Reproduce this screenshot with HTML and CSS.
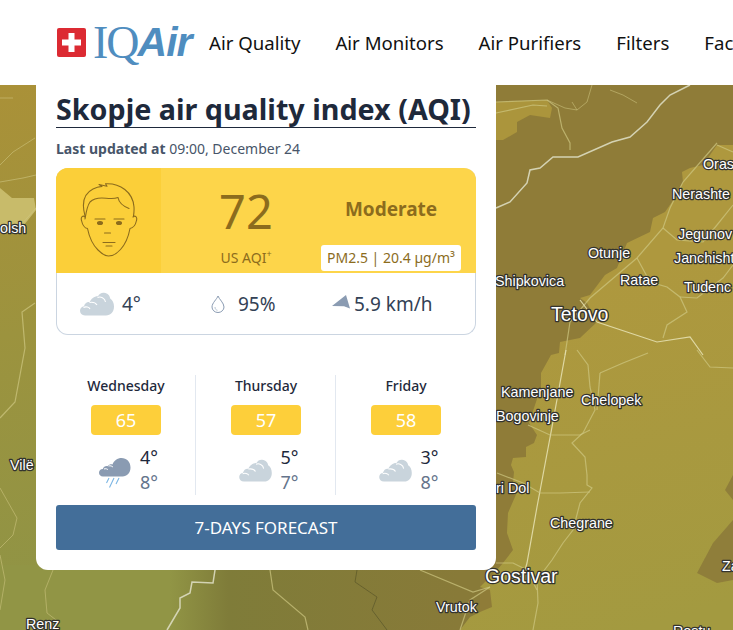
FILE: index.html
```html
<!DOCTYPE html>
<html lang="en">
<head>
<meta charset="utf-8">
<title>Skopje air quality index (AQI)</title>
<link rel="stylesheet" href="styles.css">
</head>
<body>
<svg class="defs" width="0" height="0" aria-hidden="true">
  <defs>
    <symbol id="cloud" viewBox="0 0 34 24">
      <path fill="#c9d4dc" d="M5 23.500C1.800 23.500 0 21.400 0 18.800c0-2.500 1.800-4.200 4-4.500.6-2.800 3-4.600 5.600-4.100C11 6.700 14.500 4 18 4.200c1.200-2.400 3.600-3.700 6-3.400 4 .4 5.800 3 6.200 5.800C32.600 8.200 34 11 34 14.500c0 5.500-3.400 9-8 9z"/>
      <path fill="none" stroke="#fff" stroke-width="1.100" d="M3.500 15.500c2.500-1.200 5.500-.4 6.500 1.500M9.500 10.500c3.500-.6 6 .2 7.500 2.500M17.500 5.500c3-1.500 7.500.5 8 4.500"/>
    </symbol>
    <symbol id="rain" viewBox="0 0 32 30">
      <path fill="#8a9bb2" d="M4 18.500C1.500 18.500 0 16.800 0 14.800c0-2.200 1.600-3.800 3.800-3.800.6-2 2.600-3.200 4.800-2.800C10 6.500 12 6 13.500 6.500 15 2.500 18.500 0 22.500 0c5 0 9 3.800 9 9.500 0 5.500-3.500 9-8 9z"/>
      <path fill="none" stroke="#fff" stroke-width="1" d="M5 11c1.500-.6 3.200-.2 4 .8M9.500 8c2-.5 3.500 0 4.500 1.200"/>
      <path fill="none" stroke="#7cb6e4" stroke-width="1.100" d="M10 20l-2.500 5M15 20l-4.500 9.500M20 20l-3 6"/>
    </symbol>
  </defs>
</svg>

<div class="map" aria-hidden="true">
  <svg class="map-svg" width="733" height="630" viewBox="0 0 733 630" preserveAspectRatio="none">
    <defs>
      <linearGradient id="leftGrad" x1="0" y1="85" x2="80" y2="630" gradientUnits="userSpaceOnUse">
        <stop offset="0" stop-color="#aa9138"/>
        <stop offset=".45" stop-color="#9c933e"/>
        <stop offset="1" stop-color="#8e9446"/>
      </linearGradient>
      <linearGradient id="bottomGrad" x1="170" y1="0" x2="460" y2="0" gradientUnits="userSpaceOnUse">
        <stop offset="0" stop-color="#919545"/>
        <stop offset=".2" stop-color="#7f7c39"/>
        <stop offset="1" stop-color="#887a38"/>
      </linearGradient>
      <linearGradient id="rightGrad" x1="540" y1="300" x2="640" y2="630" gradientUnits="userSpaceOnUse">
        <stop offset="0" stop-color="#ae983e"/>
        <stop offset="1" stop-color="#a39a40"/>
      </linearGradient>
      <filter id="soft"><feGaussianBlur stdDeviation=".35"/></filter>
    </defs>

    <rect width="733" height="630" fill="#8f7c38"/>
    <rect width="60" height="630" fill="url(#leftGrad)"/>
    <rect y="565" width="480" height="65" fill="url(#bottomGrad)"/>
    <rect y="565" width="170" height="65" fill="#919545"/>
    <polygon fill="#ab953c" points="496,102 547,100 552,108 550,118 530,115 517,122 517,132 503,140 496,140"/>

    <polygon fill="url(#rightGrad)" points="733,145 717,145 703,165 690,168 682,172 683,182 672,202 665,212 653,218 650,232 627,243 617,268 605,275 590,295 580,298 587,303 597,322 580,338 560,342 559,353 551,355 541,373 541,387 529,423 537,435 534,443 526,447 526,457 513,458 511,465 514,472 513,483 518,490 508,513 507,533 513,550 503,563 497,570 480,587 490,590 492,607 480,612 470,617 460,630 733,630"/>
    <polygon fill="#8f7e3a" points="733,475 725,490 733,500"/>
    <polygon fill="#8f7e3a" points="733,520 713,543 697,573 717,583 733,580"/>

    <g class="roads" filter="url(#soft)">
      <polyline class="border" points="496,208 510,202 527,183 530,170 540,168 553,157 578,157 612,142 630,137 647,122 660,105 670,95 690,85"/>
      <polyline class="border" points="215,570 213,583 192,582 190,593 180,598 180,608 167,630"/>
      <polyline points="496,102 547,100 558,108 562,128 570,143 570,150"/>
      <polyline points="496,113 533,105 547,106"/>
      <polyline class="thin" points="577,110 587,102 592,85"/>
      <polyline class="thin" points="610,90 623,95 637,103"/>
      <polyline class="thin" points="547,100 565,108 577,110 572,102"/>
      <polyline points="717,145 733,152"/>
      <polyline points="717,143 683,182 670,208 663,228 637,258 590,298 570,322 565,355"/>
      <polyline class="bright" points="580,300 597,322 630,333 657,342 690,337 703,355"/>
      <polyline points="637,258 650,282 667,287 680,297 687,312 667,325 663,338"/>
      <polyline points="680,297 697,298 723,278 733,265"/>
      <polyline points="663,228 677,240 703,242 717,225 733,205"/>
      <polyline class="bright" points="566,350 552,427 537,507 527,563 525,570"/>
      <polyline points="577,350 588,365 590,387 595,410 583,433 572,443 585,457 587,475 587,485 592,488 580,503 573,530 563,543 552,560 537,580 538,603 533,630"/>
      <polyline points="528,425 550,435 580,435 590,430"/>
      <polyline points="497,473 523,483 540,493 560,493 590,492"/>
      <polyline points="496,563 513,563 527,570 537,590"/>
      <polyline points="600,373 597,410"/>
      <polyline points="600,373 623,363 648,353"/>
      <polyline points="697,350 710,367 733,368"/>
      <polyline class="thin" points="0,165 13,152 35,138"/>
      <polyline class="thin" points="0,98 13,98"/>
      <polyline points="35,303 22,312 25,348 15,402 0,418"/>
      <polyline class="thin" points="0,488 17,518 13,535 0,548"/>
      <polyline class="thin" points="0,555 5,580 0,610"/>
      <polyline class="thin" points="53,570 45,590 47,613 60,623"/>
      <polyline points="270,570 273,590 305,617 308,630"/>
      <polyline class="dark" points="357,570 355,582 377,597 372,610 387,630"/>
      <polyline points="420,570 473,592 490,587"/>
      <polyline points="490,587 470,600 460,630"/>
    </g>
    <polygon fill="#c8bb6a" points="0,188 12,198 34,198 36,210 24,225 0,228"/>
    <path class="thin-line" d="M0 230 20 226 36 208M0 182 23 178 36 175"/>

    <g class="labels">
      <text x="703" y="169">Oras</text>
      <text x="672" y="199">Nerashte</text>
      <text x="678" y="239">Jegunov</text>
      <text x="674" y="263">Janchisht</text>
      <text x="684" y="292">Tudenc</text>
      <text x="588" y="258">Otunje</text>
      <text x="620" y="285">Ratae</text>
      <text x="495" y="286">Shipkovica</text>
      <text class="big" x="551" y="321">Tetovo</text>
      <text x="501" y="397">Kamenjane</text>
      <text x="581" y="405">Chelopek</text>
      <text x="496" y="421">Bogovinje</text>
      <text x="496" y="493">ri Dol</text>
      <text x="550" y="528">Chegrane</text>
      <text class="big" x="485" y="583">Gostivar</text>
      <text x="436" y="612">Vrutok</text>
      <text x="722" y="571">Za</text>
      <text x="673" y="636">Rostu</text>
      <text x="10" y="470">Vilë</text>
      <text x="26" y="629">Renz</text>
      <text x="0" y="233">olsh</text>
    </g>
  </svg>
</div>

<header class="header">
  <a class="logo" href="#">
    <svg class="flag" width="29" height="29" viewBox="0 0 29 29">
      <rect width="29" height="29" rx="2" fill="#dc2a32"/>
      <path fill="#fff" d="M11.500 5h6v6.500H24v6h-6.500V24h-6v-6.500H5v-6h6.500z"/>
    </svg>
    <span class="logo-iq">IQ</span><span class="logo-air">Air</span>
  </a>
  <nav class="nav">
    <a href="#">Air Quality</a>
    <a href="#">Air Monitors</a>
    <a href="#">Air Purifiers</a>
    <a href="#">Filters</a>
    <a href="#">Fac</a>
  </nav>
</header>

<main class="card">
  <h1 class="title">Skopje air quality index (AQI)</h1>
  <p class="updated"><strong>Last updated at</strong> 09:00, December 24</p>

  <section class="panel">
    <div class="aqi">
      <div class="aqi-face">
        <svg width="58" height="74" viewBox="0 0 58 74" fill="none" stroke="#8c6c1d" stroke-width="1.100" stroke-linecap="round" stroke-linejoin="round">
          <path d="M5 33C2 22 3 11 13 6c3-1.500 6-2.300 9-2.600L19 1.500l8 1.800-1.500-2.500C40 0 53 9 54 24c.2 3 0 6-.5 9"/>
          <path d="M5 36c1-6 2-13 5-17 4-4 10-4.500 16-3.800 5 .5 9 .5 12-.7 1 6 6 9 11 11"/>
          <path d="M5 34c-2-2-4.500 0-3.500 3.500C2.500 42 4 45 7.500 45.500 9 53 12 61 18 67c4 4 7 6 10.500 6s8-2 12-6.500c6-6.500 8-13 9.500-21 3.500-.5 5.500-3.500 6.500-8 1-3.500-1.500-5.500-3.500-3.500"/>
          <path d="M15 36h10M34 36h10M24.500 50h6M23 59.500h12M26 63h6"/>
          <ellipse cx="20" cy="40" rx="2.500" ry="1.500" fill="#8c6c1d"/>
          <ellipse cx="39" cy="40" rx="2.500" ry="1.500" fill="#8c6c1d"/>
        </svg>
      </div>
      <div class="aqi-value">
        <span class="aqi-number">72</span>
        <span class="aqi-unit">US AQI<sup>+</sup></span>
      </div>
      <div class="aqi-status">
        <span class="aqi-level">Moderate</span>
        <span class="aqi-chip">PM2.5 | 20.4 µg/m³</span>
      </div>
    </div>
    <div class="now">
      <div class="now-item now-temp">
        <svg class="icon-cloud" width="34" height="24"><use href="#cloud"/></svg>
        <span>4°</span>
      </div>
      <div class="now-item now-hum">
        <svg width="14" height="18" viewBox="0 0 14 18" fill="none" stroke="#8a9bb2" stroke-width="1"><path d="M7 1c1 3 6 7 6 11a6 5.500 0 0 1-12 0C1 8 6 4 7 1z"/><path d="M4 12c0 2 1 3 2.500 3.300" stroke="#b7c3d1"/></svg>
        <span>95%</span>
      </div>
      <div class="now-item now-wind">
        <svg class="wind" width="19" height="14" viewBox="0 0 19 14"><path fill="#8a9bb2" d="M0 11 14 0l4 13.500-6-2.200z"/></svg>
        <span>5.9 km/h</span>
      </div>
    </div>
  </section>

  <section class="forecast">
    <div class="day">
      <h2 class="day-name">Wednesday</h2>
      <div class="day-aqi">65</div>
      <div class="day-weather">
        <svg class="icon-rain" width="32" height="30"><use href="#rain"/></svg>
        <div class="temps"><span class="hi">4°</span><span class="lo">8°</span></div>
      </div>
    </div>
    <div class="day">
      <h2 class="day-name">Thursday</h2>
      <div class="day-aqi">57</div>
      <div class="day-weather">
        <svg width="33" height="23"><use href="#cloud"/></svg>
        <div class="temps"><span class="hi">5°</span><span class="lo">7°</span></div>
      </div>
    </div>
    <div class="day">
      <h2 class="day-name">Friday</h2>
      <div class="day-aqi">58</div>
      <div class="day-weather">
        <svg width="33" height="23"><use href="#cloud"/></svg>
        <div class="temps"><span class="hi">3°</span><span class="lo">8°</span></div>
      </div>
    </div>
  </section>

  <a class="cta" href="#">7-DAYS FORECAST</a>
</main>
</body>
</html>
```

FILE: styles.css
```css
* { box-sizing: border-box; }

html, body {
  margin: 0;
  height: 630px;
  overflow: hidden;
}

body {
  position: relative;
  font-family: "Noto Sans", "Open Sans", sans-serif;
  color: #1e293b;
  background: #8f7c38;
}

a { color: inherit; text-decoration: none; }

.defs { position: absolute; }

.map {
  position: absolute;
  inset: 0;
}

.map-svg { display: block; }

.roads polyline {
  fill: none;
  stroke: #cfc782;
  stroke-opacity: .7;
  stroke-width: 1.200;
}

.roads .thin { stroke-width: 1; stroke-opacity: .55; }
.roads .bright { stroke: #e8e3b4; stroke-opacity: .85; }
.roads .border { stroke: #dcdcc0; stroke-width: 1.500; stroke-opacity: .9; }
.roads .dark { stroke: #5f5a2a; stroke-width: 1; stroke-opacity: .8; }

.thin-line { fill: none; stroke: #cfc782; stroke-opacity: .6; }

.labels text {
  font-family: "Liberation Sans", Arial, sans-serif;
  font-size: 14.300px;
  fill: #fff;
  stroke: #33332e;
  stroke-width: 2.600px;
  paint-order: stroke;
  stroke-linejoin: round;
}

.labels .big { font-size: 19.500px; }

.header {
  position: relative;
  display: flex;
  align-items: center;
  height: 85px;
  padding-left: 57px;
  background: #fff;
  overflow: hidden;
  white-space: nowrap;
}

.logo {
  display: flex;
  align-items: center;
  flex: none;
  width: 152px;
  height: 60px;
}

.flag { flex: none; margin-right: 7px; margin-top: -1px; }

.logo-iq {
  font-family: "Liberation Serif", serif;
  font-size: 46px;
  letter-spacing: -2px;
  color: #4f8dbf;
}

.logo-air {
  font-family: "Liberation Sans", sans-serif;
  font-size: 41px;
  font-weight: 700;
  font-style: italic;
  letter-spacing: -1px;
  color: #4f8dbf;
}

.nav {
  display: flex;
  gap: 35px;
  font-size: 18.600px;
  color: #111;
}

.card {
  position: relative;
  width: 460px;
  margin-left: 36px;
  padding: 5px 20px 20px;
  background: #fff;
  border-radius: 0 0 12px 12px;
}

.title {
  margin: 0;
  height: 38px;
  font-size: 28.700px;
  line-height: 38px;
  font-weight: 700;
  white-space: nowrap;
  border-bottom: 1px solid #1e293b;
}

.updated {
  margin: 11px 0 0;
  font-size: 14px;
  line-height: 20px;
  color: #475569;
}

.updated strong { font-weight: 700; }

.panel {
  margin-top: 9px;
  border: 1px solid #cbd5e1;
  border-top: 0;
  border-radius: 12px;
}

.aqi {
  display: flex;
  height: 105px;
  margin: 0 -1px;
  background: #fdd54a;
  border-radius: 12px 12px 0 0;
  overflow: hidden;
  color: #8c6c1d;
}

.aqi-face {
  flex: none;
  display: flex;
  align-items: center;
  justify-content: center;
  width: 105px;
  padding-bottom: 2px;
  background: #fbcf39;
}

.aqi-value {
  display: flex;
  flex-direction: column;
  align-items: center;
  width: 160px;
  padding-left: 10px;
}

.aqi-number {
  margin-top: 9px;
  font-size: 47px;
  line-height: 68px;
}

.aqi-unit {
  margin-top: 3px;
  font-size: 14px;
  line-height: 20px;
}

.aqi-unit sup { font-size: 9px; line-height: 0; }

.aqi-status {
  display: flex;
  flex-direction: column;
  align-items: center;
  width: 140px;
}

.aqi-level {
  margin-top: 28px;
  font-size: 19px;
  line-height: 26px;
  font-weight: 700;
}

.aqi-chip {
  margin-top: 23px;
  width: 140px;
  height: 26px;
  padding-top: 1px;
  font-size: 14px;
  line-height: 24px;
  text-align: center;
  background: #fff;
  border-radius: 3px;
}

.now {
  display: flex;
  align-items: center;
  height: 61px;
  padding-top: 1px;
  font-size: 19px;
  color: #334155;
}

.now-item {
  display: flex;
  align-items: center;
}

.now-temp { width: 131px; padding-left: 23px; gap: 8px; }
.now-hum { width: 144px; padding-left: 23px; gap: 13px; }
.now-wind { gap: 3px; }
.wind { margin-top: -5px; }

.forecast {
  display: flex;
  margin-top: 40px;
}

.day {
  flex: 1;
  display: flex;
  flex-direction: column;
  align-items: center;
  height: 120px;
  box-shadow: -1px 0 0 #e2e8f0;
}

.day:first-child { box-shadow: none; }

.day-name {
  margin: 0;
  font-size: 14px;
  line-height: 22px;
  font-weight: 500;
}

.day-aqi {
  width: 70px;
  height: 30px;
  margin-top: 8px;
  font-size: 18px;
  line-height: 30px;
  text-align: center;
  color: #fff;
  background: #fdcf3a;
  border-radius: 4px;
}

.day-weather {
  display: flex;
  align-items: center;
  gap: 9px;
  margin-top: 10px;
  height: 50px;
  padding-left: 5px;
}

.icon-rain { margin-top: 5px; }

.temps {
  display: flex;
  flex-direction: column;
  font-size: 18px;
  line-height: 25px;
}

.lo { color: #64748b; }

.cta {
  display: block;
  height: 45px;
  margin-top: 10px;
  font-size: 17px;
  line-height: 45px;
  text-align: center;
  color: #fff;
  background: #436e99;
  border-radius: 3px;
}
```
